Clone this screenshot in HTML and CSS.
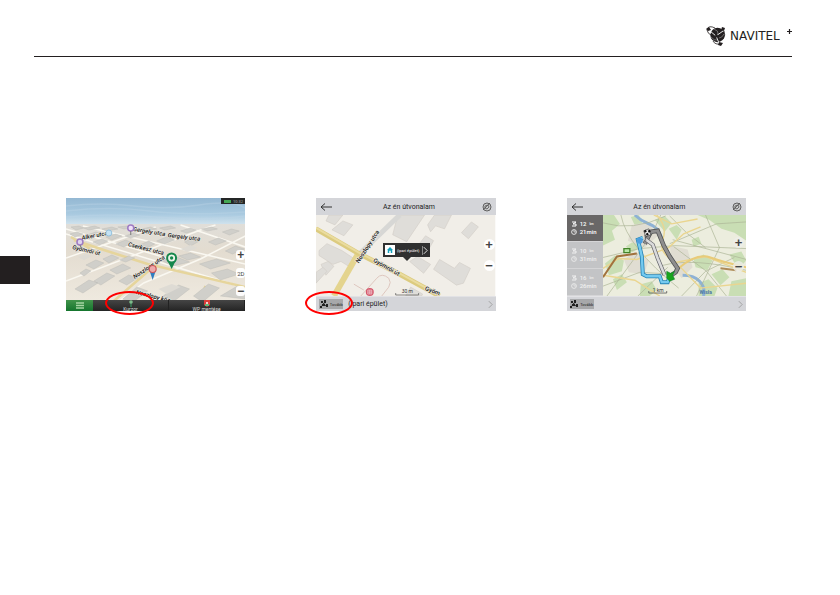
FILE: index.html
```html
<!DOCTYPE html>
<html lang="hu">
<head>
<meta charset="utf-8">
<meta name="viewport" content="width=device-width, initial-scale=1">
<title>Navitel</title>
<link rel="stylesheet" href="styles.css">
</head>
<body>
<header class="page-header">
  <div class="brand">
    <svg class="brand-mark" viewBox="0 0 20 21" aria-hidden="true">
      <circle cx="11.500" cy="10" r="7.200" fill="#231f20"/>
      <path d="M1 4Q3 0 9 3M1 5Q2 9 5 10M18 6Q20 10 17 14M15 19Q9 20 7 16" fill="none" stroke="#231f20" stroke-width=".8"/>
      <path d="M4 6L10 11L17 6M10 11L13 18" fill="none" stroke="#fff" stroke-width=".9"/>
      <path d="M8 4Q13 6 12 9M5 12Q8 16 12 15M18 9Q16 13 13 13" fill="none" stroke="#bbb" stroke-width=".5"/>
      <circle cx="10.500" cy="11" r="1.500" fill="#231f20"/>
      <path d="M0 4L3 2L5 5L2 6ZM16 2L19 3L18 6L15 5ZM13 17L17 18L15 21L12 20Z" fill="#231f20"/>
    </svg>
    <span class="brand-name">NAVITEL</span>
    <svg class="brand-plus" viewBox="0 0 5 5" aria-hidden="true"><path d="M2.500 0V5M0 2.500H5" stroke="#231f20" stroke-width="1.200"/></svg>
  </div>
</header>
<main class="figures">
  <figure class="screen">
    <svg class="scene" viewBox="0 0 180 113" preserveAspectRatio="none" aria-hidden="true">
      <defs>
        <linearGradient id="sky" x2="0" y2="1"><stop stop-color="#94b8d3"/><stop offset=".6" stop-color="#a9cae0"/><stop offset="1" stop-color="#d3e4ee"/></linearGradient>
        <linearGradient id="land" x2="0" y2="1"><stop stop-color="#e0ded9"/><stop offset=".3" stop-color="#e3dcd0"/><stop offset="1" stop-color="#f1ece2"/></linearGradient>
      </defs>
      <path d="M0 0H180V27H0Z" fill="url(#sky)"/>
      <path d="M0 8Q35 4 68 8T134 7T180 10M0 13Q45 8 84 13T180 14M0 19Q40 15 90 19T180 18" fill="none" stroke="#bfd7e7" stroke-width="1.500" opacity=".35"/>
      <path d="M0 26H180V113H0Z" fill="url(#land)"/>
      <path d="M0 36L180 90M0 60L90 29M0 83L135 32L150 27M40 113L78 85L135 61L180 38M0 31L108 62M17 28L180 66M115 27L180 49" fill="none" stroke="#faf8f1" stroke-width="1.500"/>
      <path d="M8 42L38 52L82 66L180 89M34 57L5 39M48 103L92 65M131 113L140 88" fill="none" stroke="#e6d59c" stroke-width="2.500"/>
      <g fill="#d0cfca" stroke="#b9b8b3" stroke-width=".4">
        <path d="M5 29l8-1 5 2-8 2ZM18 30l11-2 5 2-11 2ZM36 31l10-2 6 2-11 2ZM52 29l9-1 5 2-8 1ZM76 31l9-2 6 2-10 2ZM94 30l11-2 5 2-11 2ZM115 33l10-3 6 2-10 3ZM136 31l10-2 6 2-10 2ZM157 34l9-3 8 2-10 4Z"/>
        <path d="M4 36l7-2 6 2-8 3ZM21 37l9-3 6 2-9 3ZM40 39l10-3 6 2-10 4ZM59 38l9-3 6 2-9 3ZM27 44l9-3 6 2-8 4ZM50 46l10-4 7 3-9 4ZM74 47l9-4 6 3-8 4ZM91 43l10-4 8 3-10 4ZM119 44l8-4 7 3-9 5ZM143 44l10-4 8 3-11 4ZM160 53l10-5 9 3-12 5Z"/>
        <path d="M37 61l9-4 7 3-10 5ZM20 67l10-5 8 3-10 6ZM54 62l9-4 6 2-9 4ZM28 83l13-8 8 3-14 9ZM9 91l14-9 9 3-15 10ZM44 72l13-6 8 4-14 6ZM53 83l10-6 9 3-11 7ZM14 75l6-4 5 2-7 5Z"/>
        <path d="M95 62l16-3 13 5-17 4ZM113 58l12-3 10 4-13 3ZM134 66l17-5 14 4-20 6ZM146 75l16-4 12 5-19 6ZM96 99l17-12 11 4-18 14ZM128 98l15-12 11 4-17 14ZM155 98l17-10 8 3V101ZM57 101l14-12 11 4-16 12Z"/>
      </g>
      <path d="M12 59l8-3 6 2-8 4ZM115 51l10-4 7 3-10 4ZM93 91l13-5 9 3-14 7Z" fill="#dedbd4"/>
      <g class="map-label small">
        <text transform="translate(16 42) rotate(-11)">Alker utca</text>
        <text transform="translate(6 51) rotate(13)">Gyömrői út</text>
        <text transform="translate(67 33) rotate(9)">Gergely utca</text>
        <text transform="translate(102 39) rotate(7)">Gergely utca</text>
        <text transform="translate(62 48) rotate(14)">Cserkesz utca</text>
        <text transform="translate(69 81) rotate(-34)">Noszlopy utca</text>
        <text transform="translate(70 96) rotate(14)">Noszlopy köz</text>
      </g>
      <g fill="none" stroke="#9d7bc4" stroke-width="1.500"><circle cx="65" cy="30" r="3" fill="#f0dff6"/><circle cx="14" cy="44" r="3" fill="#e0d5ed"/></g>
      <circle cx="43" cy="35" r="3" fill="#c4e2f4" stroke="#94c1dd"/>
      <path d="M14 47L16 51M65 33V37" stroke="#777" stroke-width="1"/>
      <path d="M84 73l3 9 3-9Z" fill="#307dc0"/><circle cx="87" cy="71" r="3.500" fill="#edaaaa" stroke="#cf5656" stroke-width="1.200"/>
      <path d="M102 63l4 8 4-8Z" fill="#16874c"/><circle cx="106" cy="60" r="4.500" fill="#eef5eb" stroke="#16874c" stroke-width="2"/><circle cx="106" cy="60" r="1.700" fill="#16874c"/>
    </svg>
    <div class="status-bar"><span class="battery"></span><span>10:32</span></div>
    <div class="drive-controls">
      <button class="round light" type="button" aria-label="Nagyítás">+</button>
      <button class="round light mode" type="button">2D</button>
      <button class="round light" type="button" aria-label="Kicsinyítés">−</button>
    </div>
    <nav class="drive-menu">
      <button class="menu-button" type="button" aria-label="Menü"><svg viewBox="0 0 8 7"><path d="M0 1H8M0 3.500H8M0 6H8" stroke="#a6d5a4" stroke-width="1.300"/></svg></button>
      <button type="button"><svg viewBox="0 0 8 7"><path d="M4 3V7" stroke="#38a566"/><circle cx="4" cy="2" r="1.800" fill="#7dbb8a"/></svg><span>Kurzor</span></button>
      <button type="button"><svg viewBox="0 0 8 7"><path d="M1 0H7V5L4 7L1 5Z" fill="#da3e39"/><path d="M2 5H6" stroke="#62b775" stroke-width="2"/><circle cx="4" cy="3" r="1" fill="#fff"/></svg><span>WP mentése</span></button>
    </nav>
    <span class="callout cursor-callout"></span>
  </figure>

  <figure class="screen">
    <header class="screen-bar top"><button type="button" aria-label="Vissza"><svg class="arrow" viewBox="0 0 12 8"><path d="M12 4H1M5 0.500L1 4L5 7.500" fill="none" stroke="#333"/></svg></button><h2>Az én útvonalam</h2><button type="button" aria-label="Törlés"><svg class="compass" viewBox="0 0 10 10"><circle cx="5" cy="5" r="4" fill="#c9cacb" stroke="#555" stroke-width=".9"/><path d="M1 8L8 1M3 4L6 3L7 5L5 7L3 6Z" fill="none" stroke="#555" stroke-width=".8"/></svg></button></header>
    <div class="map-area">
      <svg class="map" viewBox="0 0 180 82" preserveAspectRatio="none" aria-hidden="true">
        <path d="M0 0H180V82H0Z" fill="#f1eee8"/>
        <g fill="#dfddd9" stroke="#d2cdc6" stroke-width=".6"><path d="M13 0h14L19 10 10 6ZM27 6l10 4-9 11-12-6ZM82 0h27L91 27 77 20ZM112 10l7-10h17l-7 14-9-3-5 6ZM146 18l10-11 7 5-10 12ZM103 30l7-9 8 5-5 9ZM118 55l6-10 15 9 5-6 11 6-7 15-7 2ZM94 47l8-5 13 8-7 9ZM3 36l8-7 15 7 12 8-5 8-8-5-8 3-14-9ZM5 50l7-3 6 5-8 9Z"/><path d="M0 58l7-5 4 4-11 12ZM90 82l5-9 12 7-1 2Z"/></g>
        <path d="M84 0L42 41" fill="none" stroke="#d7d7d5" stroke-width="5"/>
        <path d="M43 38L18 82" fill="none" stroke="#e4d48e" stroke-width="6"/>
        <path d="M0 14L43 39L84 60L124 82" fill="none" stroke="#dccb7f" stroke-width="5"/>
        <path d="M0 13L43 38L84 59L124 81" fill="none" stroke="#eadc9f" stroke-width="2"/>
        <path d="M45 82L61 64Q66 58 73 64Q76 68 73 73L66 82M38 70L48 76" fill="none" stroke="#dec6be" stroke-width="1"/>
        <g class="map-label"><text transform="translate(43 49) rotate(-57)">Noszlopy utca</text><text transform="translate(57 47) rotate(30)">Gyömrői út</text><text transform="translate(109 76) rotate(20)">Gyöm</text></g>
        <circle cx="54" cy="78" r="4" fill="#d5576b"/><path d="M52 76H56V80H52ZM54 76V80M52 78H56" fill="none" stroke="#fff" stroke-width=".5"/>
        <path d="M80 79v2h23v-2" fill="none" stroke="#555" stroke-width=".7"/><text class="scale" x="86" y="79">30 m</text>
      </svg>
      <button class="place-tip" type="button"><span class="home-icon"><svg viewBox="0 0 8 8"><path d="M0 4L4 0L8 4H7V8H1V4Z" fill="#14a0bb"/><path d="M3 5H5V8H3Z" fill="#fff"/></svg></span><span class="place-name">(ipari épület)</span><svg class="tip-arrow" viewBox="0 0 6 10"><path d="M1 1L5 5L1 9" fill="none" stroke="#fff"/></svg></button>
      <div class="zoom-controls"><button class="round" type="button" aria-label="Nagyítás">+</button><button class="round" type="button" aria-label="Kicsinyítés">−</button></div>
    </div>
    <footer class="screen-bar bottom"><button class="next" type="button"><svg viewBox="0 0 8 8"><path d="M1 1H3V3H1ZM4 0H6V3H4ZM2 4H5V6H2ZM6 4H8V7H6ZM0 6H2V8H0Z" fill="#222"/><path d="M2 2L7 7M6 1L1 7" stroke="#222" stroke-width=".8"/></svg>Tovább</button><span class="address">(ipari épület)</span><svg class="chevron" viewBox="0 0 6 10"><path d="M1 1L5 5L1 9" fill="none" stroke="#999"/></svg></footer>
    <span class="callout next-callout"></span>
  </figure>

  <figure class="screen">
    <header class="screen-bar top"><button type="button" aria-label="Vissza"><svg class="arrow" viewBox="0 0 12 8"><path d="M12 4H1M5 0.500L1 4L5 7.500" fill="none" stroke="#333"/></svg></button><h2>Az én útvonalam</h2><button type="button" aria-label="Törlés"><svg class="compass" viewBox="0 0 10 10"><circle cx="5" cy="5" r="4" fill="#c9cacb" stroke="#555" stroke-width=".9"/><path d="M1 8L8 1M3 4L6 3L7 5L5 7L3 6Z" fill="none" stroke="#555" stroke-width=".8"/></svg></button></header>
    <div class="map-area route-view">
      <div class="routes">
        <button class="route active" type="button"><span><svg viewBox="0 0 6 6"><path d="M1 1H5L2 3H5V5H1" fill="none" stroke="currentColor"/></svg>12<small>km</small></span><span><svg viewBox="0 0 6 6"><circle cx="3" cy="3" r="2.400" fill="none" stroke="currentColor" stroke-width=".8"/><path d="M3 1V3H5" stroke="currentColor" stroke-width=".6" fill="none"/></svg>21min</span></button>
        <button class="route" type="button"><span><svg viewBox="0 0 6 6"><path d="M1 1H5L2 3H5V5H1" fill="none" stroke="currentColor"/></svg>10<small>km</small></span><span><svg viewBox="0 0 6 6"><circle cx="3" cy="3" r="2.400" fill="none" stroke="currentColor" stroke-width=".8"/><path d="M3 1V3H5" stroke="currentColor" stroke-width=".6" fill="none"/></svg>31min</span></button>
        <button class="route" type="button"><span><svg viewBox="0 0 6 6"><path d="M1 1H5L2 3H5V5H1" fill="none" stroke="currentColor"/></svg>16<small>km</small></span><span><svg viewBox="0 0 6 6"><circle cx="3" cy="3" r="2.400" fill="none" stroke="currentColor" stroke-width=".8"/><path d="M3 1V3H5" stroke="currentColor" stroke-width=".6" fill="none"/></svg>26min</span></button>
      </div>
      <svg class="map" viewBox="0 0 144 82" preserveAspectRatio="none" aria-hidden="true">
        <path d="M0 0H144V82H0Z" fill="#ecedde"/>
        <g fill="#c9deb4"><path d="M0 0H11L17 9 9 16 12 25 0 31ZM95 0H144V26L132 18 119 14 107 5ZM2 49l10-8 9 5-2 11-13 4ZM10 65l9-5 5 8-10 8ZM52 5l10-4 7 7-7 9ZM66 14l8-4 5 5-5 10ZM89 25l7-3 3 7-8 3ZM91 45l10-5 9 6-5 10-12-3ZM109 60l11-5 7 8-9 8ZM127 40l12-3 5 9-8 9ZM96 69l10-4 9 9-3 8H96ZM129 67l15-3V82H126ZM28 2l8-2 4 9-7 4ZM23 32l10-7 6 7-10 6ZM38 70l11-3 5 9-7 6H37Z"/></g>
        <g fill="#e0ddd2"><path d="M29 10l16-3 10 14-13 12-17-7ZM67 31l18 4 5 18-11 11-9-12ZM21 45l11-8 14 9-5 14-15-2Z"/></g>
        <path d="M32 0Q37 5 44 8T54 14T60 26M80 61Q91 61 97 67T101 82" fill="none" stroke="#8eb2d5" stroke-width="3"/>
        <path d="M0 8Q30 17 63 1M0 43L37 34L72 31L144 34M4 82L49 20L58 0M18 0Q24 32 76 74M67 29L114 9L144 7M60 51Q90 43 144 56M103 0L117 33L94 82M79 82L103 57L132 43M71 32L104 57L124 82M0 72L37 58L72 60M35 82L65 53M67 1L85 19L103 33M70 25L144 45" fill="none" stroke="#adb597" stroke-width=".7"/>
        <path d="M54 0Q65 12 60 25T73 48L103 42L144 58M0 54L16 44L34 45L66 33L81 19L98 12M77 52L98 74L144 69M0 61L32 66L57 82M51 0L69 9L95 4" fill="none" stroke="#ead58f" stroke-width="1.400"/>
        <path d="M76 54Q94 38 108 43T144 53" fill="none" stroke="#e8cb79" stroke-width="2"/>
        <path d="M0 63L14 42L34 39" fill="none" stroke="#a1723d" stroke-width="2"/>
        <path d="M118 54L134 56" stroke="#ae8b57" stroke-width="2"/>
        <path d="M42 29L48 17L55 16L61 31L67 42L75 54L73 58L67 62" fill="none" stroke="#4f5052" stroke-width="4.500"/><path d="M42 29L48 17L55 16L61 31L67 42L75 54L73 58L67 62" fill="none" stroke="#8e8e8e" stroke-width="3"/>
        <path d="M42 24L50 30L55 44L62 61" fill="none" stroke="#606167" stroke-width="4"/><path d="M42 24L50 30L55 44L62 61" fill="none" stroke="#dadbdb" stroke-width="2.600"/>
        <path d="M40 23L35 25L37 33L39 42L40 60L44 62L57 62L59 68H65L67 62" fill="none" stroke="#2382b5" stroke-width="4"/><path d="M40 23L35 25L37 33L39 42L40 60L44 62L57 62L59 68H65L67 62" fill="none" stroke="#75caef" stroke-width="2.400"/>
        <circle cx="37" cy="26" r="3" fill="#4c9ee0"/>
        <path d="M41 16l5-2 2 6-5 2ZM42 20l1 6" fill="#eee" stroke="#222" stroke-width=".6"/><path d="M41 16l2-1 1 2-2 1ZM45 16l2-1 1 2-2 1ZM43 19l2-1 1 2-2 1Z" fill="#111"/>
        <path d="M64 57l4 2 4-2-2 4 2 4-5 2-3-3Z" fill="#19a51d" stroke="#09792d" stroke-width=".5"/>
        <path d="M21 34h6v4h-6Z" fill="#b9e8a7" stroke="#438329" stroke-width="1.300"/>
        <path d="M46 77v2h18v-2" fill="none" stroke="#555" stroke-width=".8"/><text class="scale" x="50" y="78">1 km</text><text class="water" x="97" y="80">Wisła</text>
      </svg>
      <div class="zoom-controls"><button class="round" type="button" aria-label="Nagyítás">+</button><button class="round" type="button" aria-label="Kicsinyítés">−</button></div>
    </div>
    <footer class="screen-bar bottom"><button class="next" type="button"><svg viewBox="0 0 8 8"><path d="M1 1H3V3H1ZM4 0H6V3H4ZM2 4H5V6H2ZM6 4H8V7H6ZM0 6H2V8H0Z" fill="#222"/><path d="M2 2L7 7M6 1L1 7" stroke="#222" stroke-width=".8"/></svg>Tovább</button><svg class="chevron" viewBox="0 0 6 10"><path d="M1 1L5 5L1 9" fill="none" stroke="#999"/></svg></footer>
  </figure>
</main>
<div class="page-tab" aria-hidden="true"></div>
</body>
</html>
```
FILE: styles.css
```css
* { box-sizing: border-box; }
body { min-height: 100vh; margin: 0; background: #fff; font-family: Roboto, "Liberation Sans", sans-serif; color: #222; }
button { margin: 0; padding: 0; border: 0; background: none; color: inherit; font: inherit; }
svg { display: block; }
.page-header { display: flex; justify-content: flex-end; align-items: flex-end; height: 57px; margin: 0 48px 0 34px; border-bottom: 1px solid #231f20; }
.brand { display: flex; align-items: center; height: 21px; margin-bottom: 10px; }
.brand-mark { width: 20px; height: 21px; margin-right: 4px; }
.brand-name { width: 57px; font: 12px/14px "DejaVu Sans", sans-serif; color: #231f20; }
.brand-plus { align-self: flex-start; width: 5px; height: 5px; margin-top: 4px; }
.figures { display: grid; grid-template-columns: repeat(3, minmax(0, 1fr)); gap: 71px; margin: 141px 94px 0 66px; padding-bottom: 24px; }
.screen { position: relative; display: flex; flex-direction: column; margin: 0; height: 113px; }
.scene { position: absolute; width: 100%; height: 100%; }
.map-label { font: 600 6px Roboto, sans-serif; fill: #262626; stroke: #f3f0e8; stroke-width: 1px; paint-order: stroke; }
.map-label.small { font-style: italic; }
.scale { font: 5px Roboto, sans-serif; fill: #333; }
.water { font: bold 5px Roboto, sans-serif; fill: #4974a4; }
.status-bar { position: relative; display: flex; justify-content: space-evenly; align-items: center; align-self: flex-end; width: 24px; height: 6px; background: #242626; color: #aaa; font-size: 4px; }
.battery { width: 7px; height: 3px; background: #44a653; }
.drive-controls { position: relative; display: flex; flex: 1; flex-direction: column; align-items: flex-end; justify-content: flex-end; gap: 8px; padding-bottom: 4px; }
.round { display: flex; align-items: center; justify-content: center; width: 11px; height: 11px; border-radius: 50%; background: #fffffff0; color: #444; font: bold 13px/11px "Liberation Sans", sans-serif; }
.round.light { height: 10px; width: 9px; font-size: 12px; border-radius: 3px; }
.round.mode { font: 6px Roboto, sans-serif; }
.drive-menu { position: relative; display: grid; grid-template-columns: 27px 76px 1fr; height: 11px; background: linear-gradient(#454545, #242424); color: #ddd; font-size: 5px; }
.drive-menu button { display: flex; flex-direction: column; align-items: center; justify-content: center; border-right: 1px solid #222; line-height: 4px; }
.drive-menu svg { width: 8px; height: 7px; }
.drive-menu .menu-button { background: linear-gradient(#42934b, #14752d); border: 0; }
.screen-bar { display: flex; align-items: center; background: #d4d5d9; }
.top { justify-content: space-between; height: 17px; padding: 0 4px; }
.top h2 { margin: 0; padding-left: 4px; font-size: 7px; font-weight: 400; line-height: 10px; }
.arrow { width: 12px; height: 8px; }
.compass { width: 10px; height: 10px; }
.map-area { position: relative; display: flex; flex: 1; min-height: 0; }
.map { flex: 1; min-width: 0; width: 100%; height: 100%; }
.zoom-controls { position: absolute; top: 24px; right: 1px; display: flex; flex-direction: column; gap: 10px; }
.place-tip { position: absolute; top: 28px; left: 37%; display: flex; align-items: center; width: 47px; height: 14px; padding: 2px; gap: 2px; background: #303030; color: #fff; font-size: 5px; }
.place-tip::after { content: ""; position: absolute; left: 20px; top: 14px; border: 4px solid transparent; border-top-color: #303030; border-bottom: 0; }
.home-icon { display: grid; place-items: center; width: 10px; height: 10px; background: #fff; }
.home-icon svg { width: 6px; height: 6px; }
.place-name { flex: 1; white-space: nowrap; font-size: 4px; }
.tip-arrow { width: 6px; height: 9px; border-left: 1px solid #888; }
.bottom { height: 15px; padding: 0 3px; gap: 5px; border-top: 1px solid #e2e2e5; }
.next { display: flex; align-items: center; justify-content: center; gap: 2px; width: 24px; height: 10px; background: #a7a8aa; font-size: 4px; }
.next svg { width: 8px; height: 8px; }
.address { font-size: 6px; line-height: 10px; }
.chevron { width: 5px; height: 9px; margin-left: auto; }
.callout { position: absolute; height: 24px; border: 2px solid #f00; border-radius: 50%; pointer-events: none; }
.cursor-callout { width: 49px; left: 39px; bottom: -4px; }
.next-callout { width: 48px; left: -11px; bottom: -4px; }
.routes { display: grid; grid-template-rows: repeat(3, 1fr); width: 36px; background: #c3c4c6; }
.route { display: flex; flex-direction: column; align-items: flex-start; justify-content: center; padding-left: 4px; border-bottom: 1px solid #d5d5d7; color: #f0f0f0; font-weight: 500; font-size: 6px; line-height: 8px; }
.route.active { background: #696767; color: #fff; }
.route span { display: flex; align-items: center; gap: 3px; }
.route svg { width: 6px; height: 6px; }
.route small { font-size: 3px; }
.route-view .zoom-controls { top: 22px; right: 2px; gap: 13px; }
.route-view .round { background: #eeede9cc; }
.bottom .address { font-size: 7px; }
.page-tab { position: absolute; top: 256px; left: 0; width: 30px; height: 28px; background: #231f20; }
```
